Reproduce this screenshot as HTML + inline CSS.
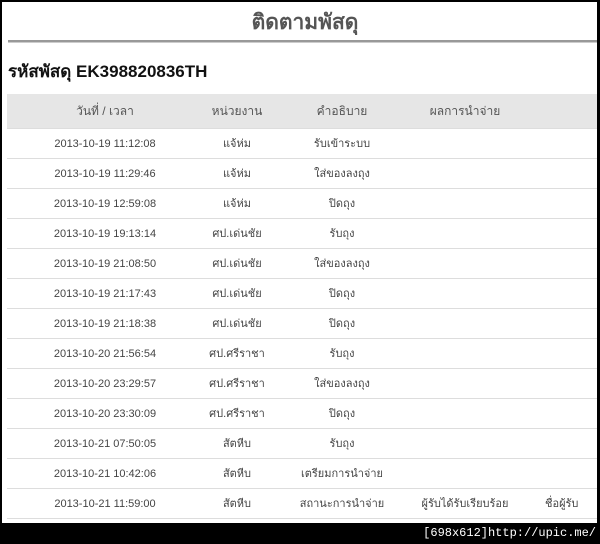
<!DOCTYPE html>
<html><head><meta charset="utf-8"><style>
body{margin:0;width:600px;height:544px;background:#000;position:relative;overflow:hidden;font-family:"Liberation Sans","Noto Sans CJK SC",sans-serif;}
#w{position:absolute;left:2px;top:2px;width:595px;height:521px;background:#fff;overflow:hidden}
h1{position:absolute;left:0;width:606px;top:8px;margin:0;text-align:center;font-size:21px;color:#555;font-weight:bold;line-height:26px}
.ln{position:absolute;left:6px;right:0;top:38px;height:2px;background:#999;border-bottom:1px solid #ccc}
h2{position:absolute;left:6px;top:59px;margin:0;font-size:17px;color:#111;font-weight:bold;line-height:22px}
table{position:absolute;left:5px;top:92px;width:600px;border-collapse:collapse;font-size:11px;color:#444;line-height:14px}
th{background:#e6e6e6;height:34px;padding:0;font-weight:normal;font-size:12px;color:#555}
td{height:28px;padding:0;padding-top:1px;border-top:1px solid #ddd;text-align:center}
#ft{position:absolute;right:4px;bottom:4px;color:#fff;font-family:"Liberation Mono",monospace;font-size:12px}
</style></head><body><div id="w">
<h1>ติดตามพัสดุ</h1><div class="ln"></div>
<h2>รหัสพัสดุ EK398820836TH</h2>
<table>
<colgroup><col style="width:196px"><col style="width:68px"><col style="width:142px"><col style="width:104px"><col></colgroup>
<tr><th>วันที่ / เวลา</th><th>หน่วยงาน</th><th>คำอธิบาย</th><th>ผลการนำจ่าย</th><th></th></tr>
<tr><td>2013-10-19 11:12:08</td><td>แจ้ห่ม</td><td>รับเข้าระบบ</td><td></td><td></td></tr>
<tr><td>2013-10-19 11:29:46</td><td>แจ้ห่ม</td><td>ใส่ของลงถุง</td><td></td><td></td></tr>
<tr><td>2013-10-19 12:59:08</td><td>แจ้ห่ม</td><td>ปิดถุง</td><td></td><td></td></tr>
<tr><td>2013-10-19 19:13:14</td><td>ศป.เด่นชัย</td><td>รับถุง</td><td></td><td></td></tr>
<tr><td>2013-10-19 21:08:50</td><td>ศป.เด่นชัย</td><td>ใส่ของลงถุง</td><td></td><td></td></tr>
<tr><td>2013-10-19 21:17:43</td><td>ศป.เด่นชัย</td><td>ปิดถุง</td><td></td><td></td></tr>
<tr><td>2013-10-19 21:18:38</td><td>ศป.เด่นชัย</td><td>ปิดถุง</td><td></td><td></td></tr>
<tr><td>2013-10-20 21:56:54</td><td>ศป.ศรีราชา</td><td>รับถุง</td><td></td><td></td></tr>
<tr><td>2013-10-20 23:29:57</td><td>ศป.ศรีราชา</td><td>ใส่ของลงถุง</td><td></td><td></td></tr>
<tr><td>2013-10-20 23:30:09</td><td>ศป.ศรีราชา</td><td>ปิดถุง</td><td></td><td></td></tr>
<tr><td>2013-10-21 07:50:05</td><td>สัตหีบ</td><td>รับถุง</td><td></td><td></td></tr>
<tr><td>2013-10-21 10:42:06</td><td>สัตหีบ</td><td>เตรียมการนำจ่าย</td><td></td><td></td></tr>
<tr><td>2013-10-21 11:59:00</td><td>สัตหีบ</td><td>สถานะการนำจ่าย</td><td>ผู้รับได้รับเรียบร้อย</td><td style="text-align:left;padding-left:28px">ชื่อผู้รับ</td></tr>
<tr><td colspan="5" style="height:4px"></td></tr>
</table></div>
<div id="ft">[698x612]http://upic.me/</div>
</body></html>
